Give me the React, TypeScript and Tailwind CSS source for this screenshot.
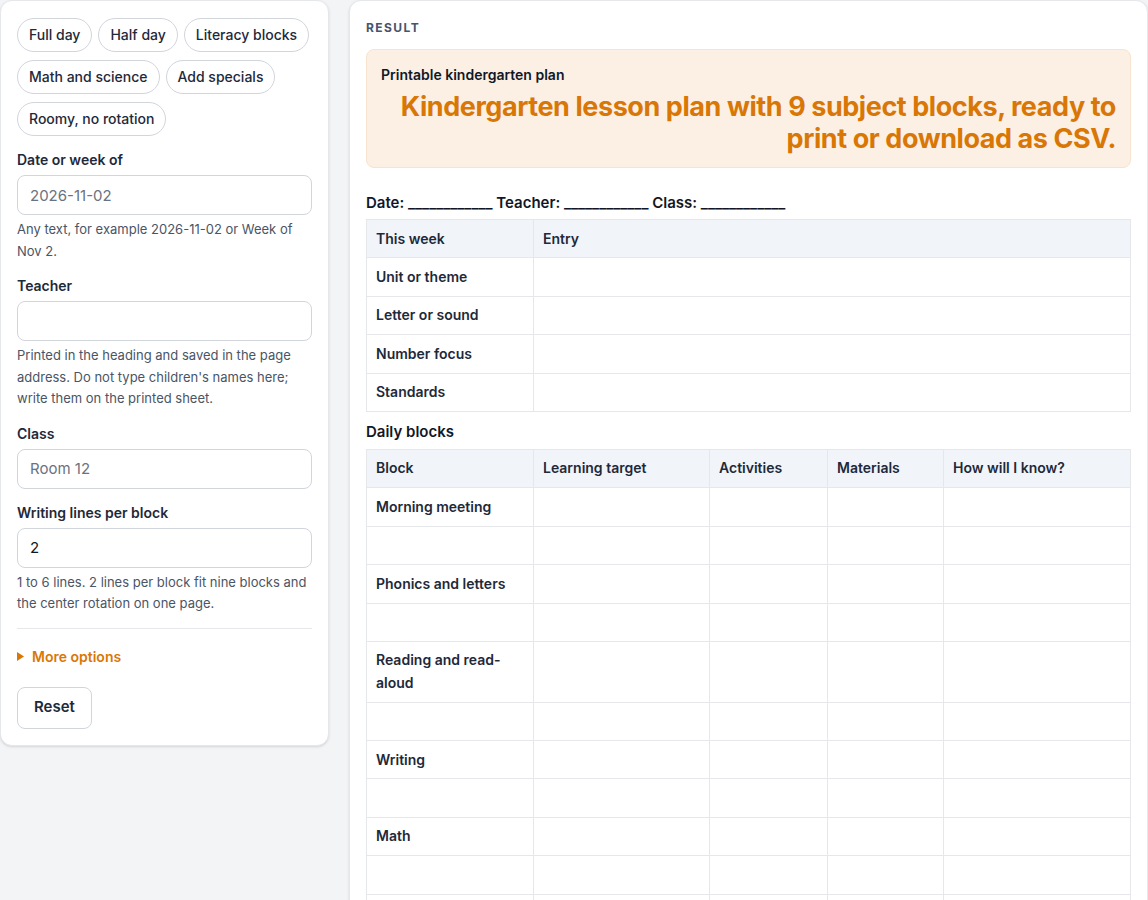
import React from 'react';

const presets = ['Full day', 'Half day', 'Literacy blocks', 'Math and science', 'Add specials', 'Roomy, no rotation'];

const weekRows = ['Unit or theme', 'Letter or sound', 'Number focus', 'Standards'];

const blocks = [
  'Morning meeting',
  'Phonics and letters',
  'Reading and read-aloud',
  'Writing',
  'Math',
  'Science and social studies',
  'Centers',
  'Outdoor play',
  'Closing circle',
];

const Field: React.FC<{ label: string; placeholder?: string; value?: string; help?: string }> = ({ label, placeholder, value, help }) => (
  <div>
    <label className="block text-sm leading-5 font-semibold text-gray-800 mb-[5px]">{label}</label>
    <input
      type="text"
      defaultValue={value}
      placeholder={placeholder}
      className="w-full h-10 rounded-lg border border-gray-300 bg-white px-3 text-[15px] text-gray-900 placeholder:text-gray-500 outline-none"
    />
    {help && <p className="mt-1 text-[13px] leading-[21.5px] text-gray-600">{help}</p>}
  </div>
);

const cell = 'border border-gray-200 px-[9px] py-[7.5px] text-sm leading-[1.6] font-semibold text-gray-800 align-top';
const head = 'border border-gray-200 bg-[#f1f5f9] px-[9px] py-[7.5px] text-left text-sm leading-[1.6] font-semibold text-gray-800';

const Blank = () => <span>____________</span>;

export default function App() {
  return (
    <div className="min-h-screen bg-gray-100" style={{ fontFamily: 'Inter, "Liberation Sans", sans-serif' }}>
      <div className="flex items-start gap-5">
        {/* Settings */}
        <aside className="w-[329px] shrink-0 rounded-xl border border-gray-200 bg-white px-4 pt-[17px] pb-4 shadow-sm">
          <div className="flex flex-wrap gap-x-1.5 gap-y-2">
            {presets.map((p) => (
              <button key={p} className="h-[34px] rounded-full border border-gray-300 bg-white px-[11px] text-sm font-medium text-gray-800">
                {p}
              </button>
            ))}
          </div>

          <div className="mt-[14px] flex flex-col gap-[14px]">
            <Field label="Date or week of" placeholder="2026-11-02" help="Any text, for example 2026-11-02 or Week of Nov 2." />
            <Field
              label="Teacher"
              help="Printed in the heading and saved in the page address. Do not type children's names here; write them on the printed sheet."
            />
            <Field label="Class" placeholder="Room 12" />
            <Field label="Writing lines per block" value="2" help="1 to 6 lines. 2 lines per block fit nine blocks and the center rotation on one page." />
          </div>

          <div className="mt-[13px] border-t border-gray-200 pt-[18px]">
            <div className="flex items-center gap-2 text-sm leading-5 font-semibold text-[#d97706]">
              <svg width="7" height="9" viewBox="0 0 7 9" className="fill-current">
                <path d="M0 0L7 4.5L0 9Z" />
              </svg>
              More options
            </div>
          </div>

          <button className="mt-5 h-[42px] rounded-lg border border-gray-300 bg-white px-4 text-[15px] font-semibold text-gray-800">
            Reset
          </button>
        </aside>

        {/* Result */}
        <main className="min-w-0 flex-1 rounded-xl border border-gray-200 bg-white px-4 pt-[19px] pb-6 shadow-sm">
          <div className="text-xs leading-4 font-bold tracking-[0.12em] text-slate-600">RESULT</div>

          <div className="mt-[13px] rounded-lg border border-[#f7e4cf] bg-[#fcf0e4] px-[14px] pt-[15px] pb-3">
            <div className="text-sm leading-5 font-semibold text-gray-900">Printable kindergarten plan</div>
            <div className="mt-[6px] text-right text-[27px] leading-8 font-bold tracking-[-0.016em] text-[#d97706]">
              Kindergarten lesson plan with 9 subject blocks, ready to print or download as CSV.
            </div>
          </div>

          <div className="mt-6 text-[15px] leading-[22px] font-semibold text-gray-900">
            Date: <Blank /> Teacher: <Blank /> Class: <Blank />
          </div>

          <table className="mt-[5px] w-full table-fixed border-collapse">
            <colgroup>
              <col className="w-[167px]" />
              <col />
            </colgroup>
            <thead>
              <tr>
                <th className={head}>This week</th>
                <th className={head}>Entry</th>
              </tr>
            </thead>
            <tbody>
              {weekRows.map((r) => (
                <tr key={r}>
                  <td className={cell}>{r}</td>
                  <td className={cell}></td>
                </tr>
              ))}
            </tbody>
          </table>

          <div className="mt-[10px] text-[15px] leading-5 font-semibold text-gray-900">Daily blocks</div>

          <table className="mt-[7px] w-full table-fixed border-collapse">
            <colgroup>
              <col className="w-[167px]" />
              <col className="w-[176px]" />
              <col className="w-[118px]" />
              <col className="w-[116px]" />
              <col />
            </colgroup>
            <thead>
              <tr>
                <th className={head}>Block</th>
                <th className={head}>Learning target</th>
                <th className={head}>Activities</th>
                <th className={head}>Materials</th>
                <th className={head}>How will I know?</th>
              </tr>
            </thead>
            <tbody>
              {blocks.map((b) => (
                <React.Fragment key={b}>
                  <tr>
                    <td className={cell}>{b}</td>
                    <td className={cell}></td>
                    <td className={cell}></td>
                    <td className={cell}></td>
                    <td className={cell}></td>
                  </tr>
                  <tr>
                    <td className={cell}>&nbsp;</td>
                    <td className={cell}></td>
                    <td className={cell}></td>
                    <td className={cell}></td>
                    <td className={cell}></td>
                  </tr>
                </React.Fragment>
              ))}
            </tbody>
          </table>
        </main>
      </div>
    </div>
  );
}
